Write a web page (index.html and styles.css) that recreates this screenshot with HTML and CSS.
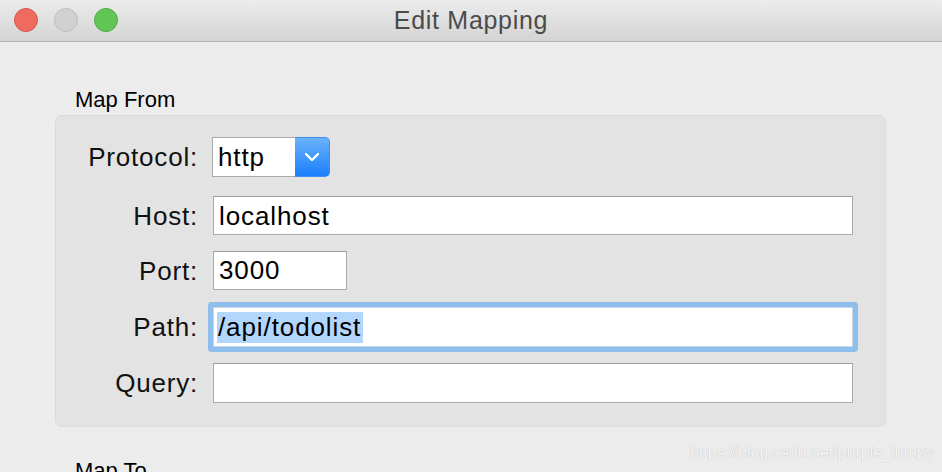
FILE: index.html
```html
<!DOCTYPE html>
<html>
<head>
<meta charset="utf-8">
<title>Edit Mapping</title>
<link rel="stylesheet" href="styles.css">
</head>
<body>
<div class="window">
  <header class="titlebar">
    <div class="lights">
      <span class="light red"></span>
      <span class="light gray"></span>
      <span class="light green"></span>
    </div>
    <div class="title">Edit Mapping</div>
  </header>
  <main class="content">
    <div class="section-label">Map From</div>
    <section class="group">
      <div class="form">
        <div class="label">Protocol:</div>
        <div class="popup">
          <span class="popup-value">http</span>
          <span class="popup-button">
            <svg width="16" height="10" viewBox="0 0 16 10"><path d="M2 2 L8 8 L14 2" fill="none" stroke="#fff" stroke-width="2.4" stroke-linecap="round" stroke-linejoin="round"/></svg>
          </span>
        </div>

        <div class="label">Host:</div>
        <div class="field wide host">localhost</div>

        <div class="label">Port:</div>
        <div class="field short">3000</div>

        <div class="label">Path:</div>
        <div class="field wide focused"><span class="selection">/api/todolist</span></div>

        <div class="label">Query:</div>
        <div class="field wide"></div>
      </div>
    </section>
    <div class="section-label to">Map To</div>
  </main>
  <div class="watermark">https://blog.csdn.net/purple_lumpy</div>
</div>
</body>
</html>
```
FILE: styles.css
```css
html, body {
  margin: 0;
  padding: 0;
  width: 942px;
  height: 472px;
  overflow: hidden;
  background: #ececec;
  font-family: "Liberation Sans", Arial, Helvetica, sans-serif;
  color: #000;
}

.window {
  position: relative;
  width: 942px;
  height: 472px;
  overflow: hidden;
}

.titlebar {
  position: relative;
  height: 41px;
  border-bottom: 1px solid #b4b4b4;
  background: linear-gradient(#ececec, #d4d4d4);
  display: flex;
  align-items: center;
  justify-content: center;
}

.lights {
  position: absolute;
  left: 14px;
  top: 8px;
  display: flex;
  gap: 16px;
}

.light {
  width: 22px;
  height: 22px;
  border-radius: 50%;
  border: 1px solid transparent;
}

.light.red { background: #ef6b60; border-color: #d6564c; }
.light.gray { background: #d1d1d1; border-color: #bebebe; }
.light.green { background: #62c655; border-color: #50a944; }

.title {
  font-size: 25px;
  line-height: 41px;
  letter-spacing: 0.7px;
  color: #4b4b4b;
}

.content {
  padding: 45px 56px 0 55px;
}

.section-label {
  font-size: 22px;
  line-height: 26px;
  padding-left: 20px;
  margin-bottom: 2px;
}

.section-label.to {
  margin-top: 31px;
}

.group {
  background: #e3e3e3;
  border: 1px solid #dadada;
  border-radius: 7px;
  padding: 21px 32px 23px 0;
  height: 266px;
}

.form {
  display: grid;
  grid-template-columns: 142px 1fr;
  grid-template-rows: 43px 39px 40px 40px 40px;
  column-gap: 15px;
  row-gap: 16px;
  align-items: start;
}

.label {
  text-align: right;
  font-size: 26px;
  line-height: 40px;
  letter-spacing: 0.8px;
  color: #111;
}

.field {
  box-sizing: border-box;
  height: 40px;
  background: #fff;
  border: 1px solid #a9a9a9;
  border-top-color: #9e9e9e;
  font-size: 26px;
  line-height: 38px;
  letter-spacing: 0.9px;
  padding-left: 5px;
  white-space: nowrap;
}

.field.host {
  height: 39px;
}

.field.short {
  width: 134px;
  height: 39px;
  line-height: 37px;
}

.field.focused {
  border-color: #c8d6e6;
  box-shadow: 0 0 0 5px #8ebeec;
  border-radius: 1px;
  padding-left: 3px;
}

.selection {
  background: #b3d6fd;
  display: inline-block;
  line-height: 31px;
  padding: 0 2px 0 1px;
  vertical-align: middle;
  margin-top: -3px;
}

.popup {
  display: flex;
  width: 118px;
  height: 40px;
  box-sizing: border-box;
  margin-left: -1px;
}

.popup-value {
  flex: 1;
  background: #fff;
  border: 1px solid #a9a9a9;
  border-right: none;
  font-size: 26px;
  line-height: 38px;
  letter-spacing: 0.9px;
  padding-left: 5px;
}

.popup-button {
  width: 35px;
  border-radius: 0 5px 5px 0;
  background: linear-gradient(#6bb2fb, #1a7ffb);
  border: 1px solid #3d8ff0;
  border-left: none;
  box-sizing: border-box;
  display: flex;
  align-items: center;
  justify-content: center;
}

.popup-button svg {
  display: block;
}

.watermark {
  position: absolute;
  left: 690px;
  top: 442px;
  font-size: 16px;
  line-height: 22px;
  color: #f7f7f7;
  text-shadow: 0 0 1px #bdbdbd, 0 0 1px #cfcfcf;
  white-space: nowrap;
}
```
